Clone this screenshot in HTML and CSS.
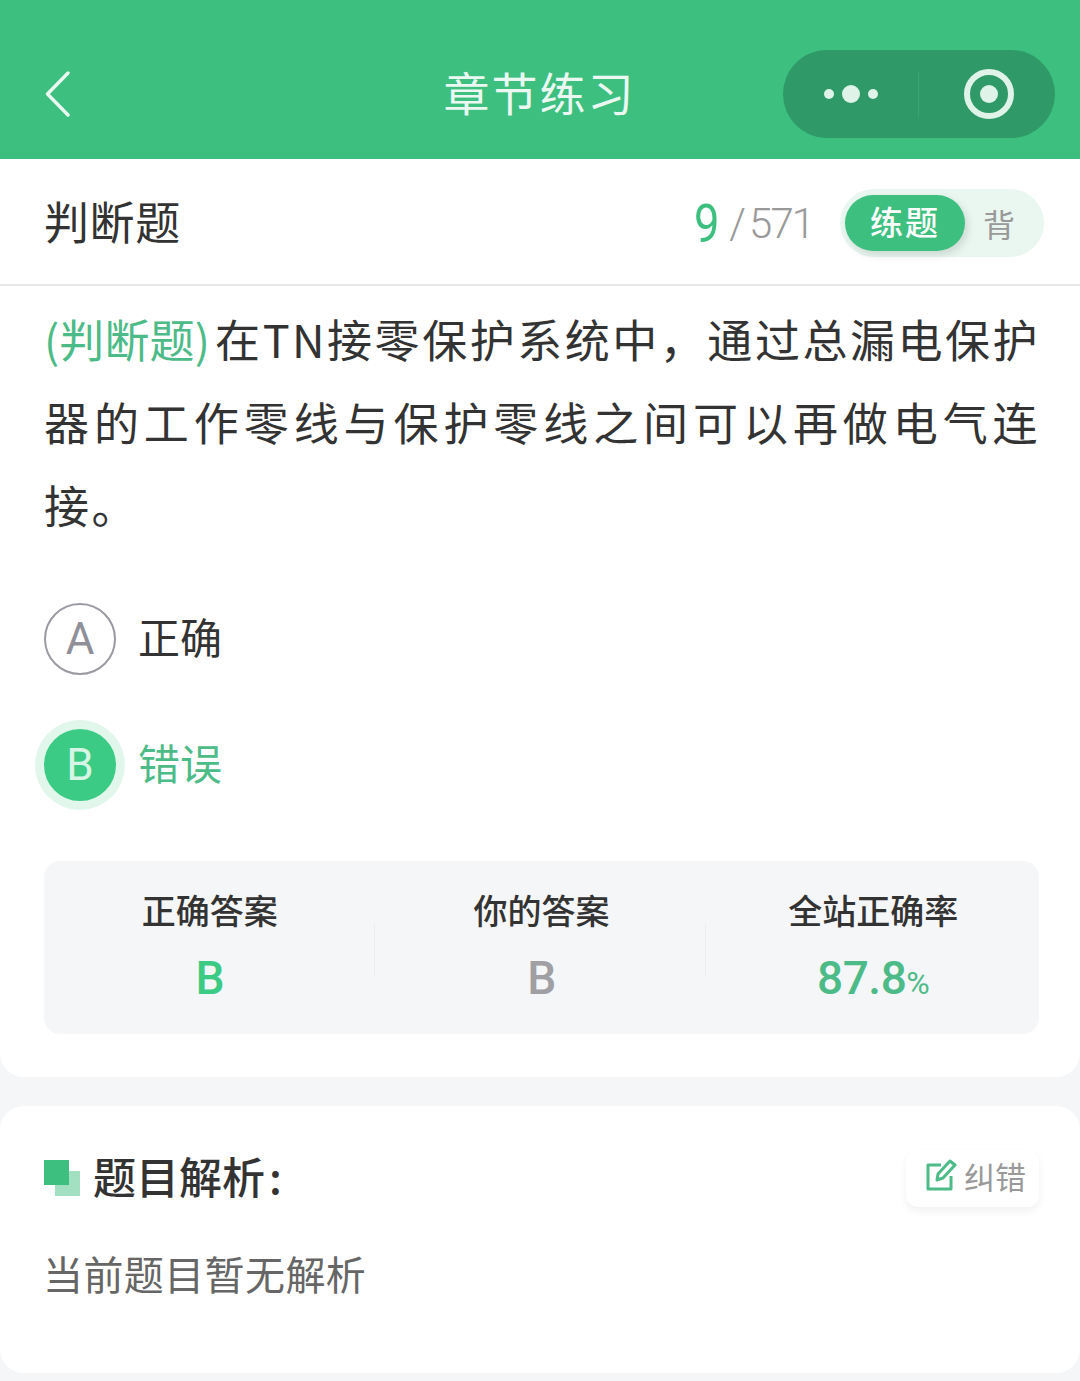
FILE: index.html
```html
<!DOCTYPE html>
<html lang="zh-CN">
<head>
<meta charset="utf-8">
<title>章节练习</title>
<link rel="stylesheet" href="styles.css">
</head>
<body>
<div class="page">
  <header class="navbar">
    <svg class="back" viewBox="0 0 26 46" width="26" height="46"><path d="M23 2 2.500 23 23 44" fill="none" stroke="#eaf8f1" stroke-width="3.400" stroke-linecap="round" stroke-linejoin="round"/></svg>
    <h1 class="nav-title">章节练习</h1>
    <div class="capsule">
      <div class="capsule-more">
        <i class="dot"></i><i class="dot dot-big"></i><i class="dot"></i>
      </div>
      <div class="capsule-close"><span class="target"></span></div>
    </div>
  </header>

  <section class="card card-question">
    <div class="topbar">
      <div class="type">判断题</div>
      <div class="topbar-right">
        <div class="count"><b>9</b><span class="count-rest">/ 571</span></div>
        <div class="mode">
          <span class="mode-on">练题</span>
          <span class="mode-off">背</span>
        </div>
      </div>
    </div>
    <p class="stem"><span class="stem-tag">(判断题)</span>在TN接零保护系统中，通过总漏电保护器的工作零线与保护零线之间可以再做电气连接。</p>
    <div class="options">
      <div class="option">
        <span class="badge">A</span><span class="option-text">正确</span>
      </div>
      <div class="option option-picked">
        <span class="badge">B</span><span class="option-text">错误</span>
      </div>
    </div>
    <div class="stats">
      <div class="stat"><div class="stat-label">正确答案</div><div class="stat-value green">B</div></div>
      <div class="stat"><div class="stat-label">你的答案</div><div class="stat-value gray">B</div></div>
      <div class="stat"><div class="stat-label">全站正确率</div><div class="stat-value rate">87.8<small>%</small></div></div>
    </div>
  </section>

  <section class="card card-analysis">
    <div class="analysis-head">
      <div class="analysis-title">
        <span class="squares"><i></i><i></i></span>
        <h2>题目解析<span class="colon">:</span></h2>
      </div>
      <button class="report">
        <svg viewBox="0 0 32 32" width="32" height="32"><path d="M16 6H3v24h23V17" fill="none" stroke="#4dbb88" stroke-width="3" stroke-linejoin="round"/><path d="M12 21l1-6L25 2l5 4-12 13z" fill="none" stroke="#4dbb88" stroke-width="3" stroke-linejoin="round"/></svg>
        <span>纠错</span>
      </button>
    </div>
    <p class="analysis-body">当前题目暂无解析</p>
  </section>
</div>
</body>
</html>
```

FILE: styles.css
```css
* { box-sizing: border-box; }

html, body {
  margin: 0;
  padding: 0;
}

body {
  background: #f5f6f8;
  font-family: "Noto Sans CJK SC", "Noto Sans", sans-serif;
  color: #333;
}

.page {
  width: 1080px;
  height: 1381px;
  overflow: hidden;
  display: flex;
  flex-direction: column;
}

/* Top navigation */
.navbar {
  position: relative;
  height: 159px;
  flex: none;
  background: #3cbf7f;
  display: flex;
  align-items: center;
  justify-content: space-between;
  padding: 29px 25px 0 45px;
}

.back { display: block; }

.nav-title {
  position: absolute;
  left: 0;
  right: 0;
  top: 60px;
  margin: 0;
  padding-right: 1px;
  text-align: center;
  font-size: 46px;
  line-height: 62px;
  font-weight: 400;
  letter-spacing: 2px;
  color: #eaf8f1;
}

.capsule {
  width: 272px;
  height: 88px;
  border-radius: 44px;
  background: #2f9a67;
  display: flex;
  align-items: center;
}

.capsule-more {
  width: 136px;
  height: 46px;
  border-right: 1px solid #38a671;
  display: flex;
  align-items: center;
  justify-content: flex-start;
  gap: 8px;
  padding-left: 41px;
}

.dot {
  width: 10px;
  height: 10px;
  border-radius: 50%;
  background: #dff3e8;
}

.dot-big { width: 18px; height: 18px; }

.capsule-close {
  flex: 1;
  display: flex;
  justify-content: center;
  padding-left: 4px;
}

.target {
  width: 50px;
  height: 50px;
  border-radius: 50%;
  border: 6px solid #dff3e8;
  display: flex;
  align-items: center;
  justify-content: center;
}

.target::before {
  content: "";
  width: 18px;
  height: 18px;
  border-radius: 50%;
  background: #dff3e8;
}

/* Cards */
.card {
  background: #fff;
  flex: none;
}

.card-question {
  height: 918px;
  border-radius: 0 0 24px 24px;
}

.topbar {
  height: 127px;
  border-bottom: 2px solid #e6e7e8;
  display: flex;
  align-items: center;
  justify-content: space-between;
  padding: 0 36px 0 44px;
}

.type {
  font-size: 45px;
  line-height: 60px;
  letter-spacing: .6px;
  margin-bottom: 2px;
  color: #333;
}

.topbar-right {
  display: flex;
  align-items: center;
  gap: 27px;
}

.count {
  display: flex;
  align-items: baseline;
  font-family: "Roboto", sans-serif;
  color: #999;
}

.count b {
  display: block;
  width: 35px;
  font-size: 54px;
  line-height: 60px;
  font-weight: 400;
  color: #3cbf7f;
  transform: translateY(4px) scaleX(.84);
  transform-origin: left center;
}

.count-rest {
  font-size: 42px;
  line-height: 60px;
  font-weight: 300;
  letter-spacing: -2px;
  word-spacing: -3px;
}

.mode {
  width: 204px;
  height: 68px;
  margin-top: 3px;
  border-radius: 34px;
  background: #e9f7f0;
  display: flex;
  align-items: center;
  padding-left: 5px;
}

.mode-on {
  width: 120px;
  height: 56px;
  border-radius: 28px;
  background: #3cbf7f;
  box-shadow: 3px 4px 8px rgba(0, 0, 0, .12);
  color: #fff;
  font-size: 33px;
  line-height: 52px;
  font-weight: 500;
  text-align: center;
  letter-spacing: 2px;
}

.mode-off {
  flex: 1;
  padding-right: 11px;
  text-align: center;
  font-size: 32px;
  line-height: 52px;
  color: #999;
}

.stem {
  margin: 11px 40px 0 44px;
  font-size: 45px;
  line-height: 83px;
  letter-spacing: 2.4px;
  text-align: justify;
  color: #333;
}

.stem-tag {
  color: #4dbb88;
  letter-spacing: 0;
  margin-right: 5px;
}

.options {
  margin: 57px 0 0 44px;
  display: flex;
  flex-direction: column;
  gap: 54px;
}

.option {
  display: flex;
  align-items: center;
  gap: 22px;
  height: 72px;
}

.badge {
  width: 72px;
  height: 72px;
  border-radius: 50%;
  border: 2px solid #9a9aa3;
  color: #8f8f99;
  font-family: "Roboto", sans-serif;
  font-size: 44px;
  font-weight: 400;
  display: flex;
  align-items: center;
  justify-content: center;
}

.option-text {
  font-size: 42px;
  line-height: 56px;
  color: #333;
  margin-top: -6px;
}

.option-picked .badge {
  background: #3bcb85;
  border-color: #3bcb85;
  color: #d6f5e5;
  box-shadow: 0 0 0 9px #e2f7ec;
}

.option-picked .option-text { color: #4dbb88; }

.stats {
  margin: 0 41px 0 44px;
  position: relative;
  top: 60px;
  height: 173px;
  border-radius: 16px;
  background: #f5f6f8;
  display: grid;
  grid-template-columns: repeat(3, 1fr);
  padding-top: 26px;
}

.stat {
  position: relative;
  text-align: center;
}

.stat + .stat::before {
  content: "";
  position: absolute;
  left: -2px;
  top: 36px;
  height: 54px;
  width: 1px;
  background: #eceef0;
}

.stat-label {
  font-size: 34px;
  line-height: 46px;
  font-weight: 500;
  color: #333;
}

.stat-value {
  margin-top: 17px;
  font-family: "Roboto", sans-serif;
  font-size: 46px;
  line-height: 56px;
  font-weight: 500;
  letter-spacing: -.5px;
}

.green { color: #3bcb85; }
.gray { color: #a0a0a4; }
.rate { color: #4dbb88; }
.rate small { font-size: 32px; font-weight: 400; }

.card-analysis {
  margin-top: 29px;
  height: 267px;
  border-radius: 24px;
  padding: 44px 41px 0 44px;
}

.analysis-head {
  display: flex;
  align-items: center;
  justify-content: space-between;
  height: 57px;
}

.analysis-title {
  display: flex;
  align-items: center;
  gap: 13px;
  margin-top: -8px;
}

.analysis-title h2 {
  margin: 0;
  font-size: 43px;
  line-height: 58px;
  font-weight: 500;
  color: #333;
}

.colon { margin-left: 4px; }

.squares {
  position: relative;
  display: block;
  width: 36px;
  height: 36px;
  margin-top: 6px;
}

.squares i {
  position: absolute;
  width: 25px;
  height: 25px;
}

.squares i:first-child { left: 11px; top: 11px; background: #a3e0c2; }
.squares i:last-child { left: 0; top: 0; background: #3cbf7f; }

.report {
  width: 133px;
  height: 57px;
  border: 0;
  border-radius: 12px;
  background: #fff;
  box-shadow: 0 4px 8px rgba(0, 0, 0, .06);
  display: flex;
  align-items: center;
  gap: 7px;
  padding: 0 0 7px 19px;
  font: inherit;
  font-size: 31px;
  color: #999;
}

.analysis-body {
  margin: 39px 0 0 -1px;
  font-size: 40px;
  line-height: 54px;
  letter-spacing: .4px;
  color: #666;
}
```
